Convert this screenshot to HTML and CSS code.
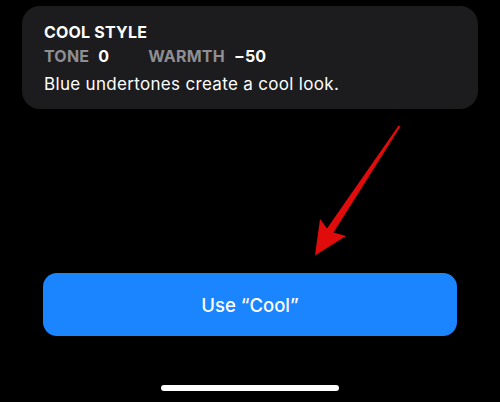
FILE: index.html
```html
<!DOCTYPE html>
<html>
<head>
<meta charset="utf-8">
<link rel="stylesheet" href="styles.css">
</head>
<body>
<div class="screen">
  <div class="card">
    <div class="title">COOL STYLE</div>
    <div class="stats">
      <span class="label">TONE</span><span class="value">0</span>
      <span class="label second">WARMTH</span><span class="value">−50</span>
    </div>
    <div class="desc">Blue undertones create a cool look.</div>
  </div>
  <button class="use-btn">Use “Cool”</button>
  <div class="home-indicator"></div>
  <svg class="arrow" width="500" height="402" viewBox="0 0 500 402">
    <polygon fill="#e00b0b" points="398.6,125.4 400.4,126.6 333.5,232.5 346,236 315,255.5 320,219 327,228.5"/>
  </svg>
</div>
</body>
</html>
```

FILE: styles.css
```css
* { box-sizing: border-box; }
html, body {
  margin: 0;
  padding: 0;
  background: #000;
}
.screen {
  position: relative;
  width: 500px;
  height: 402px;
  overflow: hidden;
  display: flex;
  flex-direction: column;
  font-family: Inter, "Liberation Sans", sans-serif;
  color: #fff;
}
.card {
  margin: 6px 22px 0 22px;
  height: 103px;
  background: #1c1c1e;
  border-radius: 18px;
  padding: 18px 22px 0 22px;
}
.title {
  font-size: 16px;
  font-weight: 700;
  line-height: 16px;
  letter-spacing: 0.2px;
}
.stats {
  margin-top: 8px;
  font-size: 16px;
  font-weight: 700;
  line-height: 16px;
  display: flex;
  letter-spacing: 0.2px;
}
.label { color: #8e8e93; }
.value { margin-left: 9px; }
.second { margin-left: 39px; }
.desc {
  margin-top: 11px;
  font-size: 17px;
  line-height: 18px;
  letter-spacing: 0.32px;
}
.use-btn {
  margin: 164px 43px 0 43px;
  height: 63px;
  border: none;
  border-radius: 14px;
  background: #1a85ff;
  color: #fff;
  font-family: Inter, "Liberation Sans", sans-serif;
  font-size: 18.5px;
  font-weight: 500;
}
.home-indicator {
  align-self: center;
  margin-top: 49px;
  width: 178px;
  height: 6px;
  border-radius: 3px;
  background: #fff;
}
.arrow {
  position: absolute;
  left: 0;
  top: 0;
  pointer-events: none;
}
```
